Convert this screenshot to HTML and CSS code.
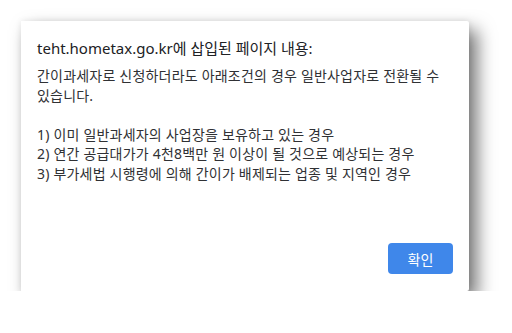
FILE: index.html
```html
<!DOCTYPE html>
<html lang="ko">
<head>
<meta charset="utf-8">
<link rel="stylesheet" href="styles.css">
</head>
<body>
<div class="stage">
  <div class="dialog">
    <div class="title">teht.hometax.go.kr에 삽입된 페이지 내용:</div>
    <div class="message">
      <p>간이과세자로 신청하더라도 아래조건의 경우 일반사업자로 전환될 수<br>있습니다.</p>
      <p class="blank">&nbsp;</p>
      <p>1) 이미 일반과세자의 사업장을 보유하고 있는 경우</p>
      <p>2) 연간 공급대가가 4천8백만 원 이상이 될 것으로 예상되는 경우</p>
      <p>3) 부가세법 시행령에 의해 간이가 배제되는 업종 및 지역인 경우</p>
    </div>
    <div class="actions">
      <button class="ok">확인</button>
    </div>
  </div>
</div>
</body>
</html>
```

FILE: styles.css
```css
html, body {
  margin: 0;
  padding: 0;
  background: #ffffff;
}
.stage {
  padding: 21px 0 0 21px;
}
.dialog {
  width: 448px;
  height: 270px;
  box-sizing: border-box;
  background: #ffffff;
  border-radius: 0 2px 2px 0;
  box-shadow: 8px 9px 18px rgba(0, 0, 0, 0.55), 0 0 6px rgba(0, 0, 0, 0.08);
  padding: 17px 16px 17px 16px;
  display: flex;
  flex-direction: column;
  font-family: "Noto Sans", "Noto Sans CJK KR", sans-serif;
  color: #202124;
}
.title {
  font-size: 15px;
  line-height: 20px;
  margin-bottom: 8px;
}
.message {
  font-size: 14px;
  letter-spacing: 0.2px;
  line-height: 19.5px;
  color: #303134;
}
.message p {
  margin: 0;
}
.actions {
  margin-top: auto;
  display: flex;
  justify-content: flex-end;
}
.ok {
  width: 65px;
  height: 31px;
  border: none;
  border-radius: 4px;
  background: #3f87ea;
  color: #ffffff;
  font-family: "Noto Sans CJK KR", sans-serif;
  font-size: 14px;
  padding: 0;
}
```
